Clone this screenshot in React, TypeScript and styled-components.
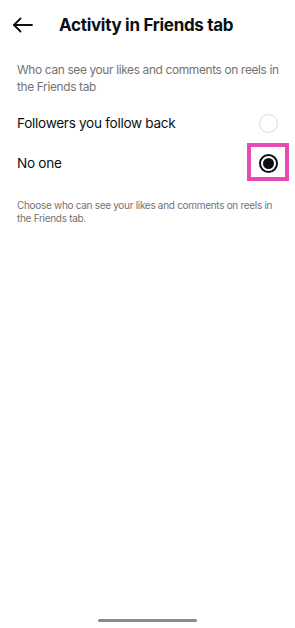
import styled, { createGlobalStyle } from 'styled-components';

const Global = createGlobalStyle`
  html, body { margin: 0; padding: 0; background: #ffffff; }
  body { font-family: Inter, 'Noto Sans', sans-serif; -webkit-font-smoothing: antialiased; }
  * { box-sizing: border-box; }
`;

const Screen = styled.div`
  width: 295px;
  height: 628px;
  background: #ffffff;
  display: flex;
  flex-direction: column;
  position: relative;
  color: #0c1014;
`;

const Header = styled.header`
  height: 50px;
  display: flex;
  align-items: center;
  padding: 0 0 0 12px;
  gap: 26px;
`;

const BackButton = styled.button`
  border: 0;
  background: none;
  padding: 0;
  width: 21px;
  height: 20px;
  display: flex;
  align-items: center;
  color: #0c1014;
`;

const Title = styled.h1`
  margin: 0;
  font-size: 17px;
  font-weight: 700;
  letter-spacing: -0.3px;
`;

const Body = styled.main`
  padding: 11px 17px 0 17px;
  display: flex;
  flex-direction: column;
`;

const Lead = styled.p`
  margin: 0 -6px 8px 0;
  font-size: 11.9px;
  line-height: 17px;
  letter-spacing: -0.35px;
  color: #737373;
`;

const Option = styled.label`
  height: 40px;
  display: flex;
  align-items: center;
  justify-content: space-between;
  font-size: 13.6px;
  letter-spacing: -0.3px;
  cursor: pointer;
`;

const Radio = styled.span<{ $checked?: boolean }>`
  width: 19px;
  height: 19px;
  border-radius: 50%;
  border: ${p => (p.$checked ? '2px solid #0c1014' : '1.2px solid #dbdbdb')};
  display: flex;
  align-items: center;
  justify-content: center;
  &::after {
    content: '';
    display: ${p => (p.$checked ? 'block' : 'none')};
    width: 11px;
    height: 11px;
    border-radius: 50%;
    background: #0c1014;
  }
`;

const Highlight = styled.span`
  position: absolute;
  left: 247px;
  top: 143px;
  width: 42px;
  height: 38px;
  border: 4px solid #e64ab4;
  pointer-events: none;
`;

const Note = styled.p`
  margin: 16px -6px 0 0;
  font-size: 10px;
  line-height: 12.5px;
  letter-spacing: -0.3px;
  color: #737373;
`;

const HomeBar = styled.div`
  position: absolute;
  bottom: 6px;
  left: 98px;
  width: 99px;
  height: 3px;
  border-radius: 2px;
  background: #8a8a8a;
`;

export default function App() {
  return (
    <>
      <Global />
      <Screen>
        <Header>
          <BackButton aria-label="Back">
            <svg width="21" height="16" viewBox="0 0 21 16" fill="none" stroke="currentColor" strokeWidth="1.8" strokeLinecap="round" strokeLinejoin="round">
              <path d="M20 8H2" />
              <path d="M8.5 1.5L2 8l6.5 6.5" />
            </svg>
          </BackButton>
          <Title>Activity in Friends tab</Title>
        </Header>
        <Body>
          <Lead>Who can see your likes and comments on reels in the Friends tab</Lead>
          <Option>
            Followers you follow back
            <Radio />
          </Option>
          <Option>
            No one
            <Radio $checked />
          </Option>
          <Note>Choose who can see your likes and comments on reels in the Friends tab.</Note>
        </Body>
        <Highlight />
        <HomeBar />
      </Screen>
    </>
  );
}
